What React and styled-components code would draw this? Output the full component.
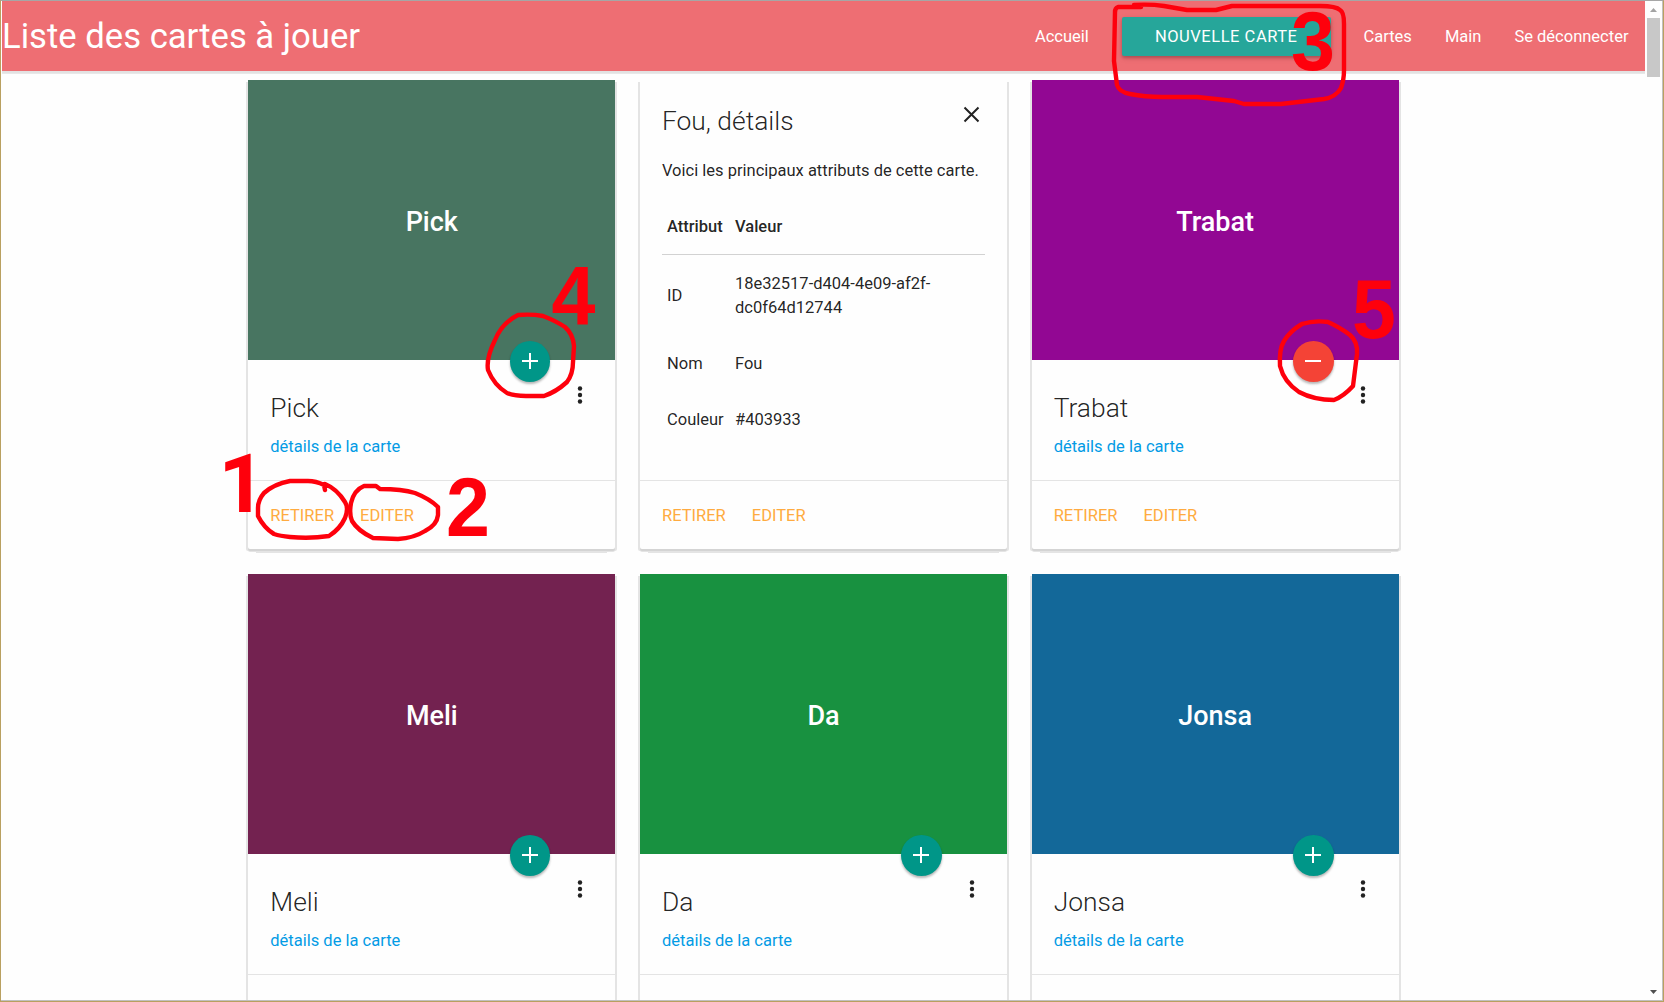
import React from "react";
import styled, { createGlobalStyle } from "styled-components";

const Global = createGlobalStyle`
  * { box-sizing: border-box; }
  html, body { margin: 0; overflow: hidden; }
  body {
    font-family: Roboto, sans-serif;
    font-size: 16px;
    line-height: 24px;
    color: rgba(0, 0, 0, 0.87);
    background: #fefefe;
  }
`;

const Frame = styled.div`
  position: relative;
  width: 1664px;
  height: 1002px;
  border: 1px solid #b9a060;
  border-top-color: #a6a6a6;
`;

const Browser = styled.div`
  display: flex;
  height: 100%;
  padding-left: 1px;
  border: 1px solid #c0c0c0;
  border-width: 0 1px 1px 0;
  background: #fefefe;
`;

const Page = styled.div`
  width: 1643px;
  height: 100%;
  overflow: hidden;
`;

const Nav = styled.nav`
  display: flex;
  justify-content: space-between;
  align-items: center;
  height: 70px;
  background: #ee6e73;
  color: #fff;
  box-shadow: 0 2px 0 #e2e2e2, 0 3px 0 #e8e8e8;
`;

const Brand = styled.a`
  font-size: 34.65px;
  line-height: 70px;
  white-space: nowrap;
`;

const NavLinks = styled.div`
  display: flex;
  align-items: center;
`;

const NavLink = styled.a`
  padding: 2px 16.5px 0;
  font-size: 16.5px;
  line-height: 70px;
`;

const NavButton = styled.a`
  height: 39px;
  margin: 0 16.5px;
  padding: 0 33px;
  border-radius: 2px;
  background: #26a69a;
  font-size: 16.5px;
  letter-spacing: 0.53px;
  line-height: 39px;
  text-transform: uppercase;
  box-shadow: 0 2px 3px rgba(0, 0, 0, 0.2), 0 2px 6px rgba(0, 0, 0, 0.12);
`;

const Cards = styled.main`
  display: grid;
  grid-template-columns: repeat(3, 367px);
  grid-auto-rows: 469px;
  gap: 25px 24.7px;
  padding: 9px 0 0 246.3px;
`;

const CardBox = styled.article`
  display: flex;
  flex-direction: column;
  background: #fefefe;
  border-radius: 0 0 2px 2px;
  box-shadow: 0 2px 0 #d4d4d4, 2px 2px 0 #e4e4e4, -2px 2px 0 #e4e4e4,
    0 3px 0 #e4e4e4, 0 12px 0 -8px #e4e4e4;
`;

const Swatch = styled.div`
  position: relative;
  display: flex;
  align-items: center;
  justify-content: center;
  height: 280px;
  padding-top: 4px;
  background: ${(p) => p.$color};
  color: #fff;
  font-size: 27px;
  font-weight: 500;
`;

const Fab = styled.button`
  position: absolute;
  left: 261.5px;
  bottom: -22px;
  display: flex;
  align-items: center;
  justify-content: center;
  width: 40.7px;
  height: 41px;
  padding: 0 1px 1px 0;
  border: 0;
  border-radius: 50%;
  background: ${(p) => (p.$remove ? "#f44336" : "#009688")};
  box-shadow: 0 2px 2px rgba(0, 0, 0, 0.16), 0 2px 3px rgba(0, 0, 0, 0.14);
`;

const Content = styled.div`
  display: flex;
  justify-content: space-between;
  flex: 1;
  padding: 30px 31.4px 0 22px;
`;

const CardTitle = styled.h2`
  margin: 0;
  font-size: 26.4px;
  font-weight: 300;
  line-height: 36px;
`;

const DetailLink = styled.a`
  display: block;
  margin-top: 9px;
  font-size: 16.5px;
  color: #039be5;
`;

const MoreIcon = styled.svg`
  display: block;
  margin-top: -4px;
`;

const Actions = styled.footer`
  display: flex;
  gap: 26px;
  height: 69px;
  padding: 23px 22px 0;
  border-top: 1px solid #e4e4e4;
  color: #ffab40;
  font-size: 16.5px;
  text-transform: uppercase;
`;

const Details = styled.div`
  flex: 1;
  padding: 23px 22px 0;
`;

const DetailsHead = styled.div`
  display: flex;
  justify-content: space-between;
  height: 36px;
`;

const CloseIcon = styled.svg`
  display: block;
  margin: 3px 5px 0 0;
`;

const Intro = styled.p`
  margin: 20px 0 16px;
  font-size: 16.5px;
  line-height: 24px;
  white-space: nowrap;
`;

const Table = styled.div`
  display: grid;
  font-size: 16.5px;
`;

const Row = styled.div`
  display: grid;
  grid-template-columns: 68px 210px;
  align-items: center;
  padding: ${(p) => (p.$head ? "16px 5px 15px" : "17px 5px 15px")};
  font-weight: ${(p) => (p.$head ? 500 : 400)};
  border-bottom: ${(p) => (p.$head ? "1px solid #d2d2d2" : "0")};
`;

const Scrollbar = styled.div`
  display: flex;
  flex-direction: column;
  align-items: center;
  justify-content: space-between;
  width: 17px;
  height: 100%;
  padding: 7px 2px 6px;
`;

const ScrollTop = styled.div`
  display: flex;
  flex-direction: column;
  align-items: center;
  gap: 6px;
`;

const Thumb = styled.div`
  width: 13px;
  height: 59px;
  background: #c8c8c8;
`;

const Marks = styled.svg`
  position: absolute;
  left: -1px;
  top: -1px;
  overflow: visible;
  pointer-events: none;
`;

const MarkNumber = styled.text`
  font-family: ${(p) => (p.$plain ? "Roboto" : '"Liberation Sans"')}, Arial, sans-serif;
  font-size: ${(p) => (p.$plain ? 82 : 84)}px;
  font-weight: 700;
  fill: #fe000c;
`;

function Card({ name, color, remove, actions }) {
  return (
    <CardBox>
      <Swatch $color={color}>
        {name}
        <Fab $remove={remove} aria-label={remove ? "Enlever" : "Ajouter"}>
          <svg width="16" height="16" viewBox="0 0 16 16" stroke="#fff" strokeWidth="2">
            <path d={remove ? "M0 8H16" : "M0 8H16M8 0V16"} />
          </svg>
        </Fab>
      </Swatch>
      <Content>
        <div>
          <CardTitle>{name}</CardTitle>
          <DetailLink>détails de la carte</DetailLink>
        </div>
        <MoreIcon width="8" height="20" viewBox="0 0 8 20" fill="#222">
          <circle cx="4" cy="2.5" r="2.2" />
          <circle cx="4" cy="9" r="2.2" />
          <circle cx="4" cy="15.5" r="2.2" />
        </MoreIcon>
      </Content>
      <CardActions items={actions} />
    </CardBox>
  );
}

function CardActions({ items = [] }) {
  return (
    <Actions>
      {items.map((item) => (
        <a key={item}>{item}</a>
      ))}
    </Actions>
  );
}

function DetailCard({ name, rows, actions }) {
  return (
    <CardBox>
      <Details>
        <DetailsHead>
          <CardTitle>{name}, détails</CardTitle>
          <CloseIcon width="17" height="17" viewBox="0 0 17 17" stroke="#222" strokeWidth="2">
            <path d="M1.5 1.5L15.5 15.5M15.5 1.5L1.5 15.5" />
          </CloseIcon>
        </DetailsHead>
        <Intro>Voici les principaux attributs de cette carte.</Intro>
        <Table>
          <Row $head>
            <span>Attribut</span>
            <span>Valeur</span>
          </Row>
          {rows.map(([k, v]) => (
            <Row key={k}>
              <span>{k}</span>
              <span>{v}</span>
            </Row>
          ))}
        </Table>
      </Details>
      <CardActions items={actions} />
    </CardBox>
  );
}

const strokes = [
  "M325 490L324 485Q316 481 308 481H290Q274 484 264 493Q258 500 258 508V516Q264 528 274 534Q280 536 290 537Q310 539 329 536Q340 529 345 518Q349 508 345 502Q337 489 325 484",
  "M380 489L376 486H364Q354 490 351 503Q349 514 352 521Q358 531 373 538L398 539Q414 538 425 531Q437 525 438 515V507Q430 499 415 493Q402 489 380 489",
  "M1141 7H1118Q1115 8 1115 12L1114 61L1117 85Q1119 92 1130 94Q1145 97 1162 97H1197L1234 101L1244 104H1281L1324 99Q1336 97 1341 88Q1344 80 1344 70V24Q1344 12 1340 10Q1336 6 1320 6H1232L1216 10H1187L1164 6Q1150 4 1134 5",
  "M518 315Q502 323 495 340Q486 358 488 370Q494 385 507 393Q514 396 526 396H544Q556 392 567 382Q573 374 573 362L574 346Q573 334 565 327Q556 321 543 316Q532 314 518 315",
  "M1302 324Q1290 331 1284 341Q1279 349 1280 366Q1284 382 1299 392Q1314 400 1334 400Q1344 396 1353 386L1357 354Q1358 342 1350 335Q1341 328 1328 322Q1314 320 1302 324",
];

const numbers = [
  ["1", 218.5, 512],
  ["2", 446, 536],
  ["3", 1291, 70],
  ["4", 551.5, 325],
  ["5", 1352, 338],
];

const rows = [
  ["ID", "18e32517-d404-4e09-af2f-dc0f64d12744"],
  ["Nom", "Fou"],
  ["Couleur", "#403933"],
];

const cardActions = ["Retirer", "Editer"];

export default function App() {
  return (
    <>
      <Global />
      <Frame>
        <Browser>
          <Page>
            <Nav>
              <Brand>Liste des cartes à jouer</Brand>
              <NavLinks>
                <NavLink>Accueil</NavLink>
                <NavButton>Nouvelle carte</NavButton>
                <NavLink>Cartes</NavLink>
                <NavLink>Main</NavLink>
                <NavLink>Se déconnecter</NavLink>
              </NavLinks>
            </Nav>
            <Cards>
              <Card name="Pick" color="#487561" actions={cardActions} />
              <DetailCard name="Fou" rows={rows} actions={cardActions} />
              <Card name="Trabat" color="#920793" actions={cardActions} remove />
              <Card name="Meli" color="#732250" />
              <Card name="Da" color="#189140" />
              <Card name="Jonsa" color="#136899" />
            </Cards>
          </Page>
          <Scrollbar>
            <ScrollTop>
              <svg width="7" height="4" viewBox="0 0 7 4" fill="#a3a3a3">
                <path d="M0 4L3.5 0L7 4Z" />
              </svg>
              <Thumb />
            </ScrollTop>
            <svg width="7" height="4" viewBox="0 0 7 4" fill="#505050">
              <path d="M0 0L3.5 4L7 0Z" />
            </svg>
          </Scrollbar>
        </Browser>
        <Marks width="1664" height="1002" viewBox="0 0 1664 1002">
          <g fill="none" stroke="#fe000c" strokeWidth="4.4" strokeLinejoin="round" strokeLinecap="round">
            {strokes.map((d) => (
              <path key={d} d={d} />
            ))}
          </g>
          {numbers.map(([n, x, y]) => (
            <MarkNumber
              key={n}
              $plain={n === "1"}
              transform={`translate(${x} ${y}) scale(${n === "1" ? 1 : 0.94} 1)`}
            >
              {n}
            </MarkNumber>
          ))}
        </Marks>
      </Frame>
    </>
  );
}
